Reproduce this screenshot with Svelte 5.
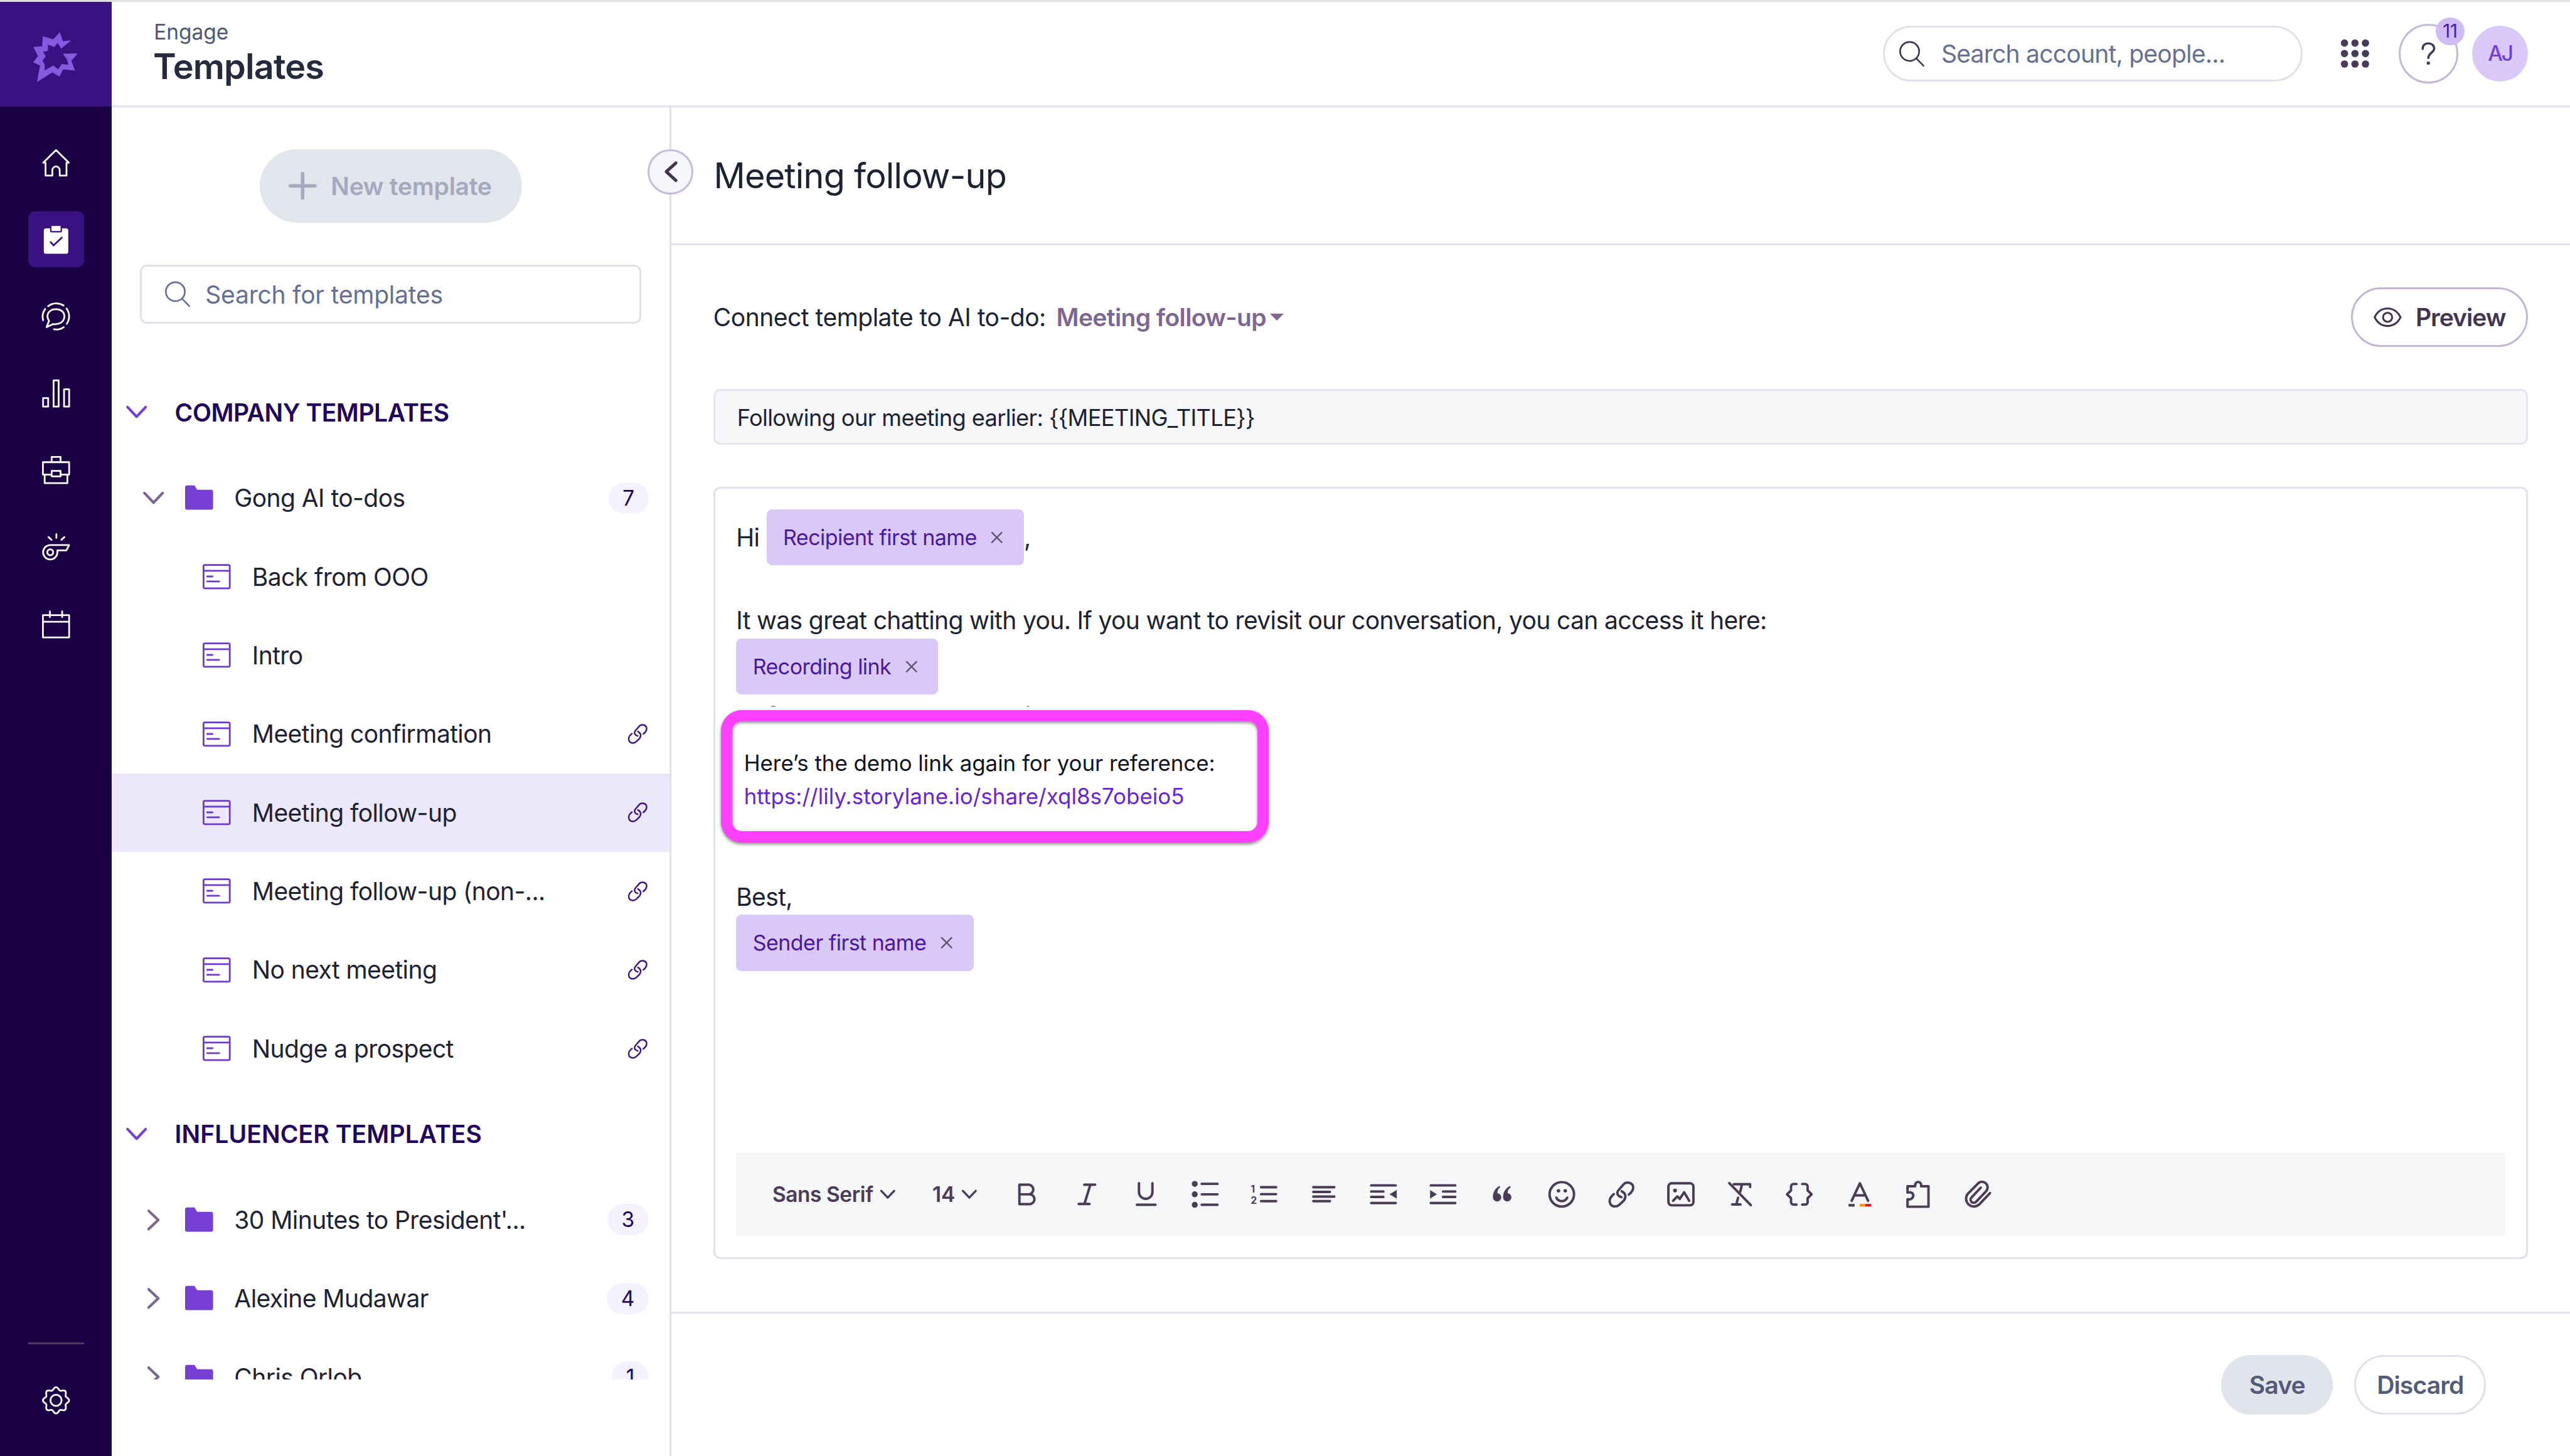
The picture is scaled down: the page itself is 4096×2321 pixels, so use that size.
<script lang="ts">
  interface Icon {
    name: string
    line?: string
    fill?: string
  }

  interface Template {
    name: string
    linked?: boolean
  }

  interface Folder {
    name: string
    count: number
    templates?: Template[]
  }

  const LINK = 'M50 62C33 58 30 45 38 35L56 14C66 1 86 2 95 16C99 30 92 42 79 52M20 50C4 62 -1 78 8 92C16 101 32 101 42 92L59 76C69 62 68 48 51 39'

  // 16x16 grid
  const nav: Icon[] = [
    { name: 'Home', line: 'M8 .8L.7 8H2v7.4h3.9v-3.1a2.1 2.1 0 0 1 4.2 0v3.1H14V8h1.3z' },
    { name: 'Engage' },
    {
      name: 'Conversations',
      line: 'M3.5 2.2A7.5 7.5 0 0 1 12.3 1.8M14 3.5A7.5 7.5 0 0 1 14.2 12.2M12.4 14.2A7.5 7.5 0 0 1 6.8 15.4M1.8 3.8A7.5 7.5 0 0 0 .6 10.2M4 10.6L2.6 14.2L6.4 12.4C10 12.9 12.8 11 12.8 8C12.8 5.4 10.6 3.9 8 3.9C5.2 3.9 3.1 5.5 3.1 8C3.1 9 3.5 9.8 4 10.6z'
    },
    { name: 'Insights', line: 'M.6 10.6h2.9v4.9H.6zM6.6 .5h2.9v15H6.6zM12.6 5.6h2.9v9.9h-2.9z' },
    { name: 'Deals', line: 'M5.5 3.5V.5h5.1v3M.5 3.5h15v7.1h-4.9V8.5H5.5v2.1h-5zM5.5 10.6v1h5.1v-1M1.5 10.6v4.9h13v-4.9' },
    {
      name: 'Coaching',
      line: 'M15.5 6.8H4.7a4.1 4.1 0 1 0 4.1 4.1V9.8h5.1zM6.4 10.9a1.7 1.7 0 1 1-3.4 0a1.7 1.7 0 1 1 3.4 0M3.7 2.2l1.7 1.6M8.2 .6v2.1M12.8 2.2l-1.7 1.6'
    },
    { name: 'Calendar', line: 'M.5 2.7h15v12.8H.5zM.5 6.5h15M4.5 .6v3.2M11.5 .6v3.2' }
  ]

  // 20x20 grid
  const tools: Icon[] = [
    { name: 'Bold', line: 'M6 4.5h5.2a2.75 2.75 0 0 1 0 5.5H6zM6 10h5.8a2.8 2.8 0 0 1 0 5.6H6z' },
    { name: 'Italic', line: 'M9 4.5h6.2M5.8 15.5h6.2M12.5 4.5l-3.4 11' },
    { name: 'Underline', line: 'M6.2 3.7v5a3.85 3.85 0 0 0 7.7 0v-5M5 16h10.6' },
    {
      name: 'Bulleted list',
      line: 'M8 4h9M8 10h9M8 16h9',
      fill: 'M5.7 4a1.7 1.7 0 1 1-3.4 0a1.7 1.7 0 1 1 3.4 0M5.7 10a1.7 1.7 0 1 1-3.4 0a1.7 1.7 0 1 1 3.4 0M5.7 16a1.7 1.7 0 1 1-3.4 0a1.7 1.7 0 1 1 3.4 0'
    },
    { name: 'Numbered list', line: 'M8.2 5.9h8.6M8.2 9.9h8.6M8.2 13.9h8.6' },
    { name: 'Align', line: 'M4 5.9h12M4 8.6h9.5M4 11.3h12M4 13.9h9.5' },
    { name: 'Outdent', line: 'M3 4.9h14M3 8.4h7M3 11.5h7M3 15h14', fill: 'M17.6 7.5v5L13.5 10z' },
    { name: 'Indent', line: 'M3 4.9h14M10 8.4h7M10 11.5h7M3 15h14', fill: 'M2.6 7.5v5L6.5 10z' },
    {
      name: 'Quote',
      fill: 'M8.6 5.2C6 6.6 4.8 8.8 4.8 11.7a2.4 2.4 0 1 0 2.6-2.4C7.3 8 7.8 6.8 9 5.8zM14.6 5.2C12 6.6 10.6 8.8 10.6 11.7a2.4 2.4 0 1 0 2.6-2.4C13.1 8 13.8 6.8 15 5.8z'
    },
    {
      name: 'Emoji',
      line: 'M17.1 10a7 7 0 1 1-14 0a7 7 0 1 1 14 0M7 11.9a3.4 3.4 0 0 0 6.2 0',
      fill: 'M9.2 8a1 1 0 1 1-2 0a1 1 0 1 1 2 0M13.1 8a1 1 0 1 1-2 0a1 1 0 1 1 2 0'
    },
    { name: 'Link' },
    {
      name: 'Image',
      line: 'M4.8 3.7h10.5a1.9 1.9 0 0 1 1.9 1.9v8.8a1.9 1.9 0 0 1-1.9 1.9H4.8a1.9 1.9 0 0 1-1.9-1.9V5.6a1.9 1.9 0 0 1 1.9-1.9zM5.6 13.7L8 11.2l1.4 1.4 2.5-3.8 2.9 4.9',
      fill: 'M7.8 7.8a1.1 1.1 0 1 1-2.2 0a1.1 1.1 0 1 1 2.2 0'
    },
    { name: 'Clear formatting', line: 'M6.6 4.2h9.3v1.6M11.3 4.2l-1.1 4.4M9 12l-1 3.8M5.6 15.8h4.8M4 3.6L16.3 16.2' },
    {
      name: 'Variable',
      line: 'M8.3 4.1H6.6A1.4 1.4 0 0 0 5.2 5.5v2.3L2.9 10l2.3 2.2v2.3a1.4 1.4 0 0 0 1.4 1.4h1.7M11.6 4.1h1.7a1.4 1.4 0 0 1 1.4 1.4v2.3L17 10l-2.3 2.2v2.3a1.4 1.4 0 0 1-1.4 1.4h-1.7'
    },
    { name: 'Text color', line: 'M5.8 13.7L10.5 3.7l4.7 10M7.3 10.6h6.4' },
    {
      name: 'Snippet',
      line: 'M4 17.1V12.8C6 13.3 7.3 12 7.3 10.7S6 8.5 4 9V5.4H8.4C8.2 3.8 9 2.9 10.1 2.9S12 3.8 11.8 5.4H16v11.7z'
    },
    {
      name: 'Attach',
      line: 'M17.1 9.3l-6.3 6.6a4.5 4.5 0 0 1-6.6-6l6-6.1a3.2 3.2 0 0 1 4.6 4.5l-5.7 6a1.8 1.8 0 0 1-2.6-2.5l5.3-5.6'
    }
  ]

  const company: Folder[] = [
    {
      name: 'Gong AI to-dos',
      count: 7,
      templates: [
        { name: 'Back from OOO' },
        { name: 'Intro' },
        { name: 'Meeting confirmation', linked: true },
        { name: 'Meeting follow-up', linked: true },
        { name: 'Meeting follow-up (non-...', linked: true },
        { name: 'No next meeting', linked: true },
        { name: 'Nudge a prospect', linked: true }
      ]
    }
  ]

  const influencer: Folder[] = [
    { name: "30 Minutes to President'...", count: 3 },
    { name: 'Alexine Mudawar', count: 4 },
    { name: 'Chris Orlob', count: 1 }
  ]

  let activeNav = $state('Engage')
  let selected = $state('Meeting follow-up')

  // cog outline: a circle with eight soft teeth
  const gear = Array.from({ length: 96 }, (_, i) => {
    const a = (i / 96) * Math.PI * 2
    const r = 6.75 + 0.75 * Math.cos(8 * a)
    return `${(8 + r * Math.sin(a)).toFixed(2)},${(8 - r * Math.cos(a)).toFixed(2)}`
  }).join(' ')
</script>

{#snippet chevron(dir: string)}
  <svg class="chevron {dir}" viewBox="0 0 12 12"><path d="M.8 3.2L6 8.7l5.2-5.5" /></svg>
{/snippet}

{#snippet search()}
  <svg class="search-icon" viewBox="0 0 16 16"><circle cx="6.7" cy="6.5" r="5.8" /><path d="M10.8 10.8l4.4 4.5" /></svg>
{/snippet}

{#snippet token(label: string)}
  <span class="token">
    <span>{label}</span>
    <svg viewBox="0 0 8 8"><path d="M.8 .8l6.4 6.4M7.2 .8L.8 7.2" /></svg>
  </span>
{/snippet}

{#snippet section(title: string, folders: Folder[])}
  <h2>{@render chevron('down')}<span>{title}</span></h2>
  {#each folders as folder (folder.name)}
    <div class="row">
      {@render chevron(folder.templates ? 'down' : 'right')}
      <svg class="folder" viewBox="0 0 16 16"><path d="M1.2 1h4.2l1.5 2.5h7.9A1.2 1.2 0 0 1 16 4.7v9a1.2 1.2 0 0 1-1.2 1.2H1.2A1.2 1.2 0 0 1 0 13.7V2.2A1.2 1.2 0 0 1 1.2 1z" /></svg>
      <span class="name">{folder.name}</span>
      <span class="count">{folder.count}</span>
    </div>
    {#each folder.templates ?? [] as t (t.name)}
      <button class="row template" class:selected={t.name === selected} onclick={() => (selected = t.name)}>
        <svg class="doc" viewBox="0 0 16 16"><path d="M1.2 1.3h13.6a.7.7 0 0 1 .7.7v12a.7.7 0 0 1-.7.7H1.2a.7.7 0 0 1-.7-.7V2a.7.7 0 0 1 .7-.7zM.5 4.6h15M2.6 7.9h3M2.6 10.7h6.8" /></svg>
        <span class="name">{t.name}</span>
        {#if t.linked}
          <svg class="linked" viewBox="0 0 106 102"><path d={LINK} /></svg>
        {/if}
      </button>
    {/each}
  {/each}
{/snippet}

<div class="app">
  <nav>
    <div class="logo">
      <svg viewBox="0 0 26 29">
        <path d="M15.1 .5L16.9 5.5L21.2 5L16.1 9.2L14 5.9L12 8.3L8.2 7L8.2 10.6L5.3 11.2L6.9 13.9L5.1 16.2L6.4 18.9L6.3 22.3L11.5 19.4L14.3 21.7L16.4 18.5L20.4 19L19.4 15.5L17.3 12.6L25 12.5L21.6 16.4L23.6 21.9L17 21.2L14.9 25.2L10.9 22.9L2.4 28.3L4.1 19.1L.2 17.3L3 13.8L.3 8.7L5.3 8.4L5.7 2.7L11.5 4.4z" />
      </svg>
    </div>
    <div class="nav-items">
      {#each nav as item (item.name)}
        <button class="nav-btn" class:active={item.name === activeNav} title={item.name} onclick={() => (activeNav = item.name)}>
          {#if item.line}
            <svg viewBox="0 0 16 16"><path d={item.line} /></svg>
          {:else}
            <svg viewBox="0 0 16 16">
              <rect class="board" x="1" y="1.4" width="14" height="14.6" rx="1.3" />
              <rect class="clip" x="5" y="-.3" width="6" height="3.7" rx=".4" />
              <path class="check" d="M4.9 9.3l1.7 1.9 4.7-4.5" />
            </svg>
          {/if}
        </button>
      {/each}
    </div>
    <div class="nav-bottom">
      <button class="nav-btn" title="Settings">
        <svg viewBox="0 0 16 16"><polygon points={gear} /><circle cx="8" cy="8" r="3.2" /></svg>
      </button>
    </div>
  </nav>

  <div class="page">
    <header>
      <div class="titles">
        <span class="crumb">Engage</span>
        <h1>Templates</h1>
      </div>
      <div class="global-search">{@render search()}<span>Search account, people...</span></div>
      <svg class="dots" viewBox="0 0 16 16">
        {#each [2, 8, 14] as cy}
          {#each [2, 8, 14] as cx}
            <circle {cx} {cy} r="2.1" />
          {/each}
        {/each}
      </svg>
      <button class="help">
        <svg viewBox="0 0 10 14"><path d="M1.6 4.2C1.5 2.1 2.9 .8 5 .8S8.5 2.2 8.5 4C8.5 6.3 5 6.6 5 9.6" /><circle cx="5" cy="12.7" r="1" /></svg>
        <span class="badge">11</span>
      </button>
      <div class="avatar">AJ</div>
    </header>

    <div class="columns">
      <aside>
        <button class="new">
          <svg viewBox="0 0 16 16"><path d="M8 1v14M1 8h14" /></svg>
          <span>New template</span>
        </button>
        <div class="filter">{@render search()}<span>Search for templates</span></div>
        <div class="list">
          {@render section('COMPANY TEMPLATES', company)}
          {@render section('INFLUENCER TEMPLATES', influencer)}
        </div>
        <button class="collapse" title="Collapse">
          <svg viewBox="0 0 8 12"><path d="M6.9 1L1.4 6l5.5 5" /></svg>
        </button>
      </aside>

      <main>
        <div class="heading">Meeting follow-up</div>

        <div class="content">
          <div class="connect">
            <span>Connect template to AI to-do:</span>
            <button class="todo"><span>Meeting follow-up</span><i></i></button>
            <button class="preview">
              <svg viewBox="0 0 16 12"><path d="M.6 6C2.2 2.7 4.9 1 8 1s5.8 1.7 7.4 5C13.8 9.3 11.1 11 8 11S2.2 9.3 .6 6z" /><circle cx="8" cy="6" r="2.6" /></svg>
              <span>Preview</span>
            </button>
          </div>

          <div class="subject"><span>{'Following our meeting earlier: {{MEETING_TITLE}}'}</span></div>

          <div class="editor">
            <div class="line tall"><span>Hi</span>{@render token('Recipient first name')}<span>,</span></div>
            <div class="line"></div>
            <div class="line"><span>It was great chatting with you. If you want to revisit our conversation, you can access it here:</span></div>
            <div class="line tall">{@render token('Recording link')}</div>
            <div class="highlight">
              <p>Here’s the demo link again for your reference:</p>
              <p class="url">https://lily.storylane.io/share/xql8s7obeio5</p>
            </div>
            <div class="line">Best,</div>
            <div class="line tall">{@render token('Sender first name')}</div>

            <div class="toolbar">
              <button class="font"><span>Sans Serif</span>{@render chevron('down')}</button>
              <button class="size"><span>14</span>{@render chevron('down')}</button>
              {#each tools as tool (tool.name)}
                <button class="tool" title={tool.name}>
                  <svg viewBox="0 0 20 20">
                    {#if tool.line}<path class="stroke" d={tool.line} />{/if}
                    {#if tool.fill}<path d={tool.fill} />{/if}
                    {#if tool.name === 'Link'}
                      <path class="stroke link" transform="translate(2.9 2.6) scale(.145)" d={LINK} />
                    {:else if tool.name === 'Numbered list'}
                      <text x="2.3" y="8.9">1</text>
                      <text x="2.3" y="15.4">2</text>
                    {:else if tool.name === 'Text color'}
                      <rect x="4" y="15.5" width="3.5" height="1.5" />
                      <rect class="orange" x="10.4" y="15.5" width="3.2" height="1.5" />
                      <rect class="red" x="13.6" y="15.5" width="3.4" height="1.5" />
                    {/if}
                  </svg>
                </button>
              {/each}
            </div>
          </div>
        </div>

        <footer>
          <button class="save">Save</button>
          <button class="discard">Discard</button>
        </footer>
      </main>
    </div>
  </div>
</div>

<style>
  :global(html), :global(body) {
    margin: 0;
    overflow: hidden;
    background: #fff;
  }

  .app {
    --line: 1.08px;
    zoom: 2.7864;
    box-sizing: border-box;
    width: 1470px;
    height: 833px;
    display: flex;
    overflow: hidden;
    border-top: var(--line) solid #dfdfdf;
    font-family: Inter, "Liberation Sans", sans-serif;
    font-size: 14px;
    color: #1d2233;
    background: #fff;
  }

  .app * { box-sizing: border-box; }

  span, p, h1, h2 { white-space: nowrap; }

  button {
    margin: 0;
    padding: 0;
    border: none;
    background: none;
    font: inherit;
    letter-spacing: inherit;
    color: inherit;
    cursor: pointer;
  }

  svg {
    display: block;
    flex-shrink: 0;
    overflow: visible;
    fill: none;
    stroke: currentColor;
    stroke-linecap: round;
    stroke-linejoin: round;
  }

  /* navigation rail */
  nav {
    width: 64px;
    flex-shrink: 0;
    display: flex;
    flex-direction: column;
    background: #1b0046;
    color: #fff;
  }

  .logo {
    height: 60px;
    padding: 17.2px 0 0 19px;
    background: #3a1181;
  }
  .logo svg {
    width: 26px;
    height: 29px;
    fill: #8759df;
    stroke: #8759df;
    stroke-width: 0.4;
  }

  .nav-items {
    display: flex;
    flex-direction: column;
    align-items: center;
    gap: 12px;
    padding-top: 16px;
  }

  .nav-btn {
    width: 32px;
    height: 32px;
    display: flex;
    align-items: center;
    justify-content: center;
    border-radius: 4px;
  }
  .nav-btn svg { width: 16px; height: 16px; }
  .nav-btn.active { background: #3a1181; }

  .board { fill: #fff; stroke: none; }
  .clip { fill: #fff; stroke: #3a1181; stroke-width: 0.8; }
  .check { stroke: #3a1181; }

  .nav-bottom {
    width: 32px;
    margin: auto auto 16px;
    padding-top: 16px;
    border-top: var(--line) solid #4d3a60;
  }

  /* header */
  .page {
    flex: 1;
    min-width: 0;
    display: flex;
    flex-direction: column;
  }

  header {
    height: 60.3px;
    flex-shrink: 0;
    display: flex;
    align-items: center;
    padding: 0 24px;
    border-bottom: var(--line) solid #dfe2ea;
  }

  .titles {
    display: flex;
    flex-direction: column;
    margin-right: auto;
  }

  .crumb {
    font-size: 12px;
    line-height: 15px;
    color: #4f5873;
  }

  h1 {
    margin: 0 0 0 -0.4px;
    font-size: 20px;
    line-height: 24px;
    font-weight: 600;
    letter-spacing: -0.3px;
    color: #252b3c;
  }

  .search-icon { width: 15px; height: 15px; }

  .global-search {
    width: 240px;
    height: 32px;
    display: flex;
    align-items: center;
    gap: 9.3px;
    padding-left: 8px;
    border: var(--line) solid #dfe1ea;
    border-radius: 16px;
    color: #656f92;
    letter-spacing: -0.27px;
  }
  .global-search .search-icon { color: #3f3350; }

  .dots {
    width: 16px;
    height: 16px;
    margin-left: 22px;
    fill: #4a3a57;
    stroke: none;
  }

  .help {
    position: relative;
    width: 34px;
    height: 34px;
    display: flex;
    align-items: center;
    justify-content: center;
    margin-left: 17px;
    border: var(--line) solid #c5b8d6;
    border-radius: 50%;
    color: #43344f;
  }
  .help svg { width: 9.5px; height: 13.3px; stroke-width: 1.3; }
  .help circle { fill: currentColor; stroke: none; }

  .badge {
    position: absolute;
    top: -4.8px;
    right: -4.8px;
    width: 16.5px;
    height: 16px;
    border-radius: 8px;
    background: #cfbbf5;
    color: #4a17a8;
    font-size: 10.5px;
    line-height: 16px;
    text-align: center;
  }

  .avatar {
    width: 32px;
    height: 32px;
    margin-left: 8px;
    border-radius: 50%;
    background: #d9c8f8;
    color: #7340d6;
    font-size: 12px;
    font-weight: 500;
    line-height: 32px;
    letter-spacing: -0.8px;
    text-align: center;
  }

  .columns {
    flex: 1;
    min-height: 0;
    display: flex;
  }

  /* template list */
  aside {
    position: relative;
    width: 320px;
    flex-shrink: 0;
    padding-top: 24px;
    border-right: var(--line) solid #dfe2ea;
  }

  .new {
    width: 150px;
    height: 42px;
    display: flex;
    align-items: center;
    gap: 8.3px;
    margin: 0 auto 24px;
    padding-left: 16.5px;
    border-radius: 21px;
    background: #e3e5ec;
    color: #a3a9bf;
    font-weight: 600;
    letter-spacing: -0.1px;
  }
  .new svg { width: 16px; height: 16px; stroke-width: 2; }

  .filter {
    height: 34px;
    display: flex;
    align-items: center;
    gap: 8.4px;
    margin: 0 16px 24px;
    padding-left: 13px;
    border: var(--line) solid #dfe1ea;
    border-radius: 4px;
    color: #656f92;
    letter-spacing: -0.08px;
  }

  .list {
    height: 580px;
    overflow: hidden;
  }

  .chevron { width: 12px; height: 12px; stroke-width: 1.5; }
  .chevron.right { transform: rotate(-90deg); }

  h2 {
    height: 53px;
    display: flex;
    align-items: center;
    gap: 16px;
    margin: 0;
    padding-left: 8px;
    font-size: 14px;
    font-weight: 600;
    letter-spacing: 0.04px;
    color: #21045e;
  }
  h2:first-child { letter-spacing: -0.16px; }
  h2 .chevron { color: #7340d6; }

  .row {
    width: 100%;
    height: 45px;
    display: flex;
    align-items: center;
    gap: 12px;
    padding: 0 12px 0 18px;
    text-align: left;
    letter-spacing: -0.21px;
  }
  .row > .chevron { color: #7c6591; }

  .folder {
    width: 16px;
    height: 16px;
    fill: #7740d4;
    stroke: none;
  }

  .name { flex: 1; }

  .count {
    padding: 0 8px;
    border-radius: 9px;
    background: #f5f1fe;
    color: #21045e;
    font-size: 12px;
    line-height: 18px;
    letter-spacing: 0;
  }

  .template { padding-left: 52px; gap: 12.2px; }
  .template.selected { background: #ede7fb; }
  .doc { width: 16px; height: 16px; color: #6d38d3; }
  .linked {
    width: 11.7px;
    height: 11.3px;
    color: #3f1387;
    stroke-width: 8;
  }

  .collapse {
    position: absolute;
    top: 24px;
    right: -13.6px;
    width: 26px;
    height: 26px;
    display: flex;
    align-items: center;
    justify-content: center;
    border: var(--line) solid #c8bbd9;
    border-radius: 50%;
    background: #f5f6f9;
    color: #43344f;
  }
  .collapse svg { width: 8px; height: 12px; stroke-width: 1.8; }

  /* editor pane */
  main {
    flex: 1;
    min-width: 0;
    display: flex;
    flex-direction: column;
  }

  .heading {
    height: 79px;
    padding-left: 24.2px;
    border-bottom: var(--line) solid #dfe2ea;
    font-size: 20px;
    line-height: 78px;
    letter-spacing: -0.28px;
  }

  .content {
    height: 610px;
    display: flex;
    flex-direction: column;
    gap: 24px;
    padding: 24px 24px 30px;
  }

  .connect {
    height: 34px;
    display: flex;
    align-items: center;
    letter-spacing: -0.18px;
  }

  .todo {
    display: flex;
    align-items: center;
    gap: 2.2px;
    margin-left: 6px;
    color: #7f6592;
    font-weight: 600;
    letter-spacing: -0.22px;
  }
  .todo i {
    border: 4px solid transparent;
    border-top-color: currentColor;
    border-bottom: none;
  }

  .preview {
    width: 101.4px;
    height: 34px;
    display: flex;
    align-items: center;
    gap: 8px;
    margin-left: auto;
    padding-left: 12px;
    border: var(--line) solid #c5b6d6;
    border-radius: 17px;
    color: #43344f;
    font-weight: 600;
    letter-spacing: -0.35px;
  }
  .preview svg { width: 16px; height: 12px; stroke-width: 1.1; }

  .subject {
    height: 32px;
    padding-left: 12.5px;
    border: var(--line) solid #e3e5ee;
    border-radius: 4px;
    background: #f6f7f9;
    font-size: 13px;
    line-height: 31px;
    letter-spacing: -0.225px;
  }

  .editor {
    flex: 1;
    display: flex;
    flex-direction: column;
    padding: 12px;
    border: var(--line) solid #dfe2ea;
    border-radius: 4px;
  }

  .line {
    height: 21px;
    display: flex;
    align-items: center;
    letter-spacing: -0.232px;
  }
  .line.tall { height: 32px; }
  .line span + .token { margin-left: 4px; }

  .token {
    height: 32px;
    display: flex;
    align-items: center;
    gap: 8px;
    padding: 0 12px 0 9.5px;
    border-radius: 3px;
    background: #dac8f8;
    color: #4a179f;
    font-size: 12.2px;
    letter-spacing: -0.19px;
  }
  .token svg { width: 7px; height: 7px; color: #5b5877; }

  .highlight {
    position: relative;
    width: 313.3px;
    height: 75.4px;
    margin: 9px 0 20.6px -8.6px;
    padding: 14.2px 0 0 6.6px;
    border: 6.8px solid #ff40ff;
    border-radius: 12px;
    background: #fff;
    box-shadow: 0 1px 2px rgba(0, 0, 0, 0.45), inset 0 1px 1.5px rgba(0, 0, 0, 0.4);
    font-size: 12.5px;
    line-height: 19px;
    color: #10121f;
  }
  /* tips of the line of text that the box covers */
  .highlight::before {
    content: '';
    position: absolute;
    top: -9px;
    left: 22px;
    width: 147.6px;
    height: 0.6px;
    background: linear-gradient(90deg, #9a9ca6 2.4px, transparent 2.4px, transparent 146.4px, #9a9ca6 146.4px);
  }
  .highlight p { margin: 0; }
  .highlight .url { color: #6524d8; letter-spacing: 0.03px; }

  .toolbar {
    height: 48px;
    display: flex;
    align-items: center;
    margin-top: auto;
    padding-left: 20.7px;
    background: #f5f6f8;
    color: #4a3b57;
    font-size: 12px;
    font-weight: 600;
  }
  .font, .size {
    display: flex;
    align-items: center;
    gap: 4px;
  }
  .font { width: 91.5px; letter-spacing: -0.15px; }
  .size { width: 37px; }
  .toolbar .chevron { width: 8.5px; height: 8.5px; stroke-width: 1.7; }

  .tool {
    width: 34px;
    height: 34px;
    display: flex;
    align-items: center;
    justify-content: center;
  }
  .tool svg {
    width: 20px;
    height: 20px;
    fill: currentColor;
    stroke: none;
  }
  .tool .stroke { fill: none; stroke: currentColor; stroke-width: 1.4; }
  .tool .link { stroke-width: 9.5; }
  .tool text { font-size: 5.5px; font-weight: 700; }
  .tool .orange { fill: #ff9500; }
  .tool .red { fill: #e8102a; }

  footer {
    flex: 1;
    display: flex;
    align-items: center;
    justify-content: flex-end;
    gap: 12.3px;
    padding-right: 48px;
    border-top: var(--line) solid #dfe2ea;
    color: #535b78;
    font-weight: 600;
    letter-spacing: -0.3px;
  }
  .save {
    width: 63.8px;
    height: 34px;
    border-radius: 17px;
    background: #e2e4ec;
  }
  .discard {
    width: 75.3px;
    height: 34px;
    border: var(--line) solid #dfe2ea;
    border-radius: 17px;
  }
</style>
